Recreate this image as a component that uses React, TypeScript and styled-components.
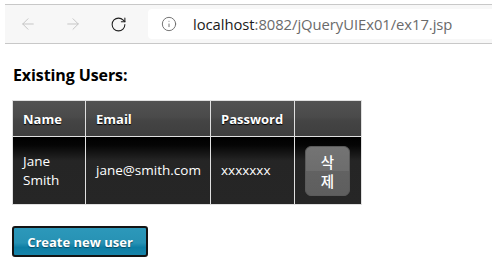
import React from "react";
import styled, { createGlobalStyle } from "styled-components";
import { ArrowLeft, ArrowRight, RotateCw, Info } from "lucide-react";

const Global = createGlobalStyle`
  html, body { margin: 0; padding: 0; background: #fff; }
  body { font-family: "Open Sans", "Noto Sans", sans-serif; }
`;

const Chrome = styled.div`
  margin: 4px 7px 0 5px;
  height: 38px;
  border-top: 1px solid #c8c8c8;
  border-bottom: 1px solid #c8c8c8;
  background: #f7f7f7;
  display: flex;
  align-items: center;
`;

const NavButton = styled.div<{ $w: number; $color: string }>`
  width: ${(p) => p.$w}px;
  height: 30px;
  display: flex;
  align-items: center;
  justify-content: center;
  color: ${(p) => p.$color};
`;

const UrlBox = styled.div`
  flex: 1;
  height: 30px;
  margin-left: 7px;
  background: #fff;
  border-radius: 4px 0 0 4px;
  display: flex;
  align-items: center;
  padding-left: 13px;
  gap: 16px;
  color: #6b6b6b;
`;

const UrlText = styled.span`
  font-family: "Open Sans", sans-serif;
  font-size: 14.8px;
  color: #6a6a6a;
  letter-spacing: -0.05px;
`;

const Host = styled.span`
  color: #1b1b1b;
`;

const Page = styled.div`
  padding: 20px 0 0 12px;
`;

const Heading = styled.h3`
  margin: 0 0 14px 1px;
  font-size: 16px;
  line-height: 22px;
  font-weight: 700;
  color: #000;
  letter-spacing: -0.1px;
`;

const Table = styled.table`
  border-collapse: collapse;
  width: 350px;
  table-layout: fixed;
  color: #fff;
  font-size: 13.5px;
`;

const Col = styled.col<{ $w: number }>`
  width: ${(p) => p.$w}px;
`;

const HeadRow = styled.tr`
  height: 36px;
  background: linear-gradient(#525252 0%, #4a4a4a 45%, #444 55%, #3e3e3e 100%);
`;

const BodyRow = styled.tr`
  height: 68px;
  background: linear-gradient(#000 0%, #050505 12%, #252525 35%, #262626 100%);
`;

const Th = styled.th`
  border: 1px solid #e0e0e0;
  text-align: left;
  padding: 0 10px;
  font-weight: 700;
  font-size: 13px;
  text-shadow: 0 1px 1px #000;
`;

const Td = styled.td`
  border: 1px solid #e0e0e0;
  padding: 0 10px;
  line-height: 19px;
  vertical-align: middle;
`;

const DeleteButton = styled.button`
  width: 45px;
  height: 50px;
  border: 1px solid #5a5a5a;
  border-radius: 6px;
  background: linear-gradient(#747474 0%, #6d6d6d 50%, #626262 50%, #5e5e5e 100%);
  color: #fff;
  font-family: "Noto Sans CJK KR", sans-serif;
  font-size: 14.5px;
  font-weight: 500;
  line-height: 19px;
  padding: 0 14px;
  display: block;
`;

const CreateButton = styled.button`
  margin-top: 21px;
  width: 136px;
  height: 31px;
  border: 2px solid #141414;
  border-radius: 3px;
  background: linear-gradient(#2c98ba 0%, #2792b4 55%, #0e7ea4 72%, #1784aa 100%);
  color: #fff;
  font-family: "Open Sans", sans-serif;
  font-weight: 700;
  font-size: 13px;
  text-shadow: 0 1px 1px #0a4a60;
  padding: 0;
`;

export default function App() {
  return (
    <>
      <Global />
      <Chrome>
        <NavButton $w={46} $color="#c4c4c4">
          <ArrowLeft size={18} strokeWidth={1.3} />
        </NavButton>
        <NavButton $w={44} $color="#c4c4c4">
          <ArrowRight size={18} strokeWidth={1.3} />
        </NavButton>
        <NavButton $w={46} $color="#1f1f1f">
          <RotateCw size={17} strokeWidth={1.5} />
        </NavButton>
        <UrlBox>
          <Info size={16} strokeWidth={1.4} />
          <UrlText>
            <Host>localhost</Host>:8082/jQueryUIEx01/ex17.jsp
          </UrlText>
        </UrlBox>
      </Chrome>
      <Page>
        <Heading>Existing Users:</Heading>
        <Table>
          <colgroup>
            <Col $w={73} />
            <Col $w={125} />
            <Col $w={84} />
            <Col $w={67} />
          </colgroup>
          <thead>
            <HeadRow>
              <Th>Name</Th>
              <Th>Email</Th>
              <Th>Password</Th>
              <Th></Th>
            </HeadRow>
          </thead>
          <tbody>
            <BodyRow>
              <Td>Jane Smith</Td>
              <Td>jane@smith.com</Td>
              <Td>xxxxxxx</Td>
              <Td>
                <DeleteButton>삭제</DeleteButton>
              </Td>
            </BodyRow>
          </tbody>
        </Table>
        <CreateButton>Create new user</CreateButton>
      </Page>
    </>
  );
}
